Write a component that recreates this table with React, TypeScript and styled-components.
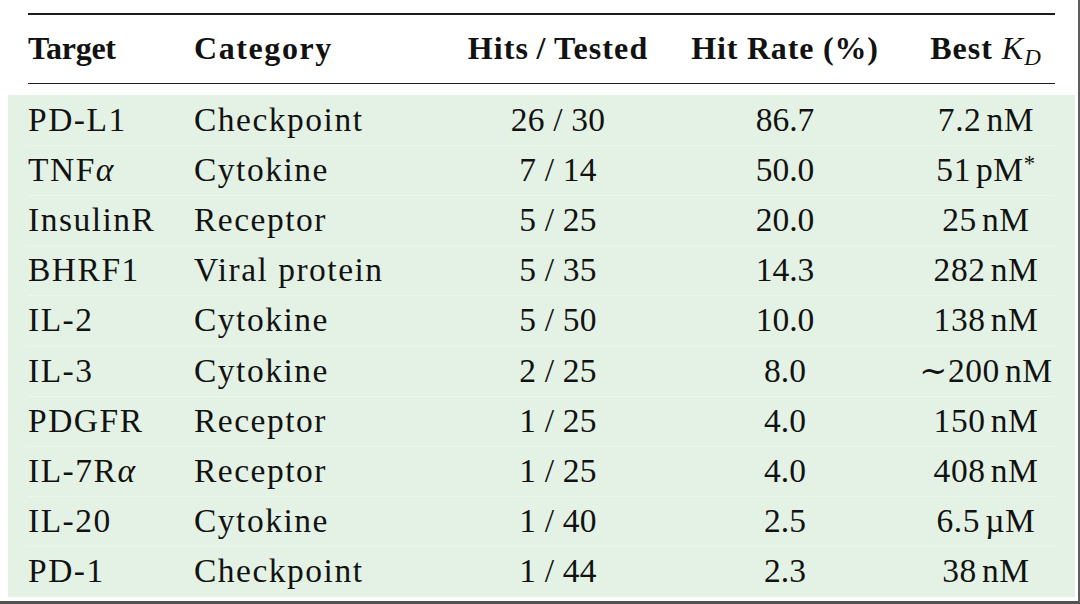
import React from "react";
import styled, { createGlobalStyle } from "styled-components";

const GlobalStyle = createGlobalStyle`
  html, body {
    margin: 0;
    padding: 0;
    background: #ffffff;
  }
  body {
    font-family: "Liberation Serif", "DejaVu Serif", serif;
    color: #121212;
  }
`;

const Frame = styled.div`
  width: 1080px;
  height: 604px;
  box-sizing: border-box;
  padding: 13px 23px 0 28px;
  border-right: 2px solid #5e5e5e;
  border-bottom: 3px solid #525252;
  background: #ffffff;
  overflow: hidden;
`;

const Rule = styled.div<{ $weight: number }>`
  height: ${(p) => p.$weight}px;
  background: #1c1c1c;
`;

const Row = styled.div<{ $head?: boolean }>`
  display: grid;
  grid-template-columns: 166px 250px 228px 226px 157px;
  height: ${(p) => (p.$head ? "67.7px" : "50.2px")};
  line-height: ${(p) => (p.$head ? "67.7px" : "50.2px")};
  font-size: ${(p) => (p.$head ? "32px" : "33.5px")};
  font-weight: ${(p) => (p.$head ? 700 : 400)};
  white-space: nowrap;
`;

const Body = styled.div`
  margin: 10.5px -20px 0;
  padding: 0 20px;
  background: #e4f2e5;
  ${Row} {
    box-shadow: 0 1px 0 rgba(255, 255, 255, 0.28);
  }
`;

const Cell = styled.div<{ $align: "left" | "center"; $track: number; $inset?: number }>`
  text-align: ${(p) => p.$align};
  letter-spacing: ${(p) => p.$track}px;
  padding-left: ${(p) => p.$inset ?? 0}px;
`;

const Greek = styled.i`
  font-style: italic;
  letter-spacing: 0;
`;

const Unit = styled.span`
  margin-left: 5px;
`;

const MathVar = styled.span`
  font-style: italic;
  font-weight: 400;
  sub {
    font-size: 0.72em;
    line-height: 0;
    vertical-align: -0.28em;
  }
`;

const Star = styled.sup`
  font-size: 0.68em;
  line-height: 0;
  vertical-align: 0.42em;
`;

type Col = { align: "left" | "center"; track: number; head: number; inset?: number };

const cols: Col[] = [
  { align: "left", track: 1.5, head: -0.3 },
  { align: "left", track: 1.5, head: 1.6 },
  { align: "center", track: 0.2, head: 1.1 },
  { align: "center", track: 0, head: 0.8 },
  { align: "center", track: 0.6, head: 1, inset: 19 },
];

const thin = "\u2009";

const kd = (value: string, unit: React.ReactNode) => (
  <>
    {value}
    <Unit>{unit}</Unit>
  </>
);

const rows: React.ReactNode[][] = [
  ["PD-L1", "Checkpoint", "26 / 30", "86.7", kd("7.2", "nM")],
  [<>TNF<Greek>α</Greek></>, "Cytokine", "7 / 14", "50.0", kd("51", <>pM<Star>*</Star></>)],
  ["InsulinR", "Receptor", "5 / 25", "20.0", kd("25", "nM")],
  ["BHRF1", "Viral protein", "5 / 35", "14.3", kd("282", "nM")],
  ["IL-2", "Cytokine", "5 / 50", "10.0", kd("138", "nM")],
  ["IL-3", "Cytokine", "2 / 25", "8.0", kd("\u223C200", "nM")],
  ["PDGFR", "Receptor", "1 / 25", "4.0", kd("150", "nM")],
  [<>IL-7R<Greek>α</Greek></>, "Receptor", "1 / 25", "4.0", kd("408", "nM")],
  ["IL-20", "Cytokine", "1 / 40", "2.5", kd("6.5", "µM")],
  ["PD-1", "Checkpoint", "1 / 44", "2.3", kd("38", "nM")],
];

const headers: React.ReactNode[] = [
  "Target",
  "Category",
  `Hits${thin}/${thin}Tested`,
  "Hit Rate (%)",
  <>Best <MathVar>K<sub>D</sub></MathVar></>,
];

export default function App() {
  return (
    <>
      <GlobalStyle />
      <Frame>
        <Rule $weight={2} />
        <Row $head>
          {headers.map((h, i) => (
            <Cell key={i} $align={cols[i].align} $track={cols[i].head} $inset={cols[i].inset}>
              {h}
            </Cell>
          ))}
        </Row>
        <Rule $weight={1.5} />
        <Body>
          {rows.map((r, ri) => (
            <Row key={ri}>
              {r.map((c, ci) => (
                <Cell key={ci} $align={cols[ci].align} $track={cols[ci].track} $inset={cols[ci].inset}>
                  {c}
                </Cell>
              ))}
            </Row>
          ))}
        </Body>
      </Frame>
    </>
  );
}
